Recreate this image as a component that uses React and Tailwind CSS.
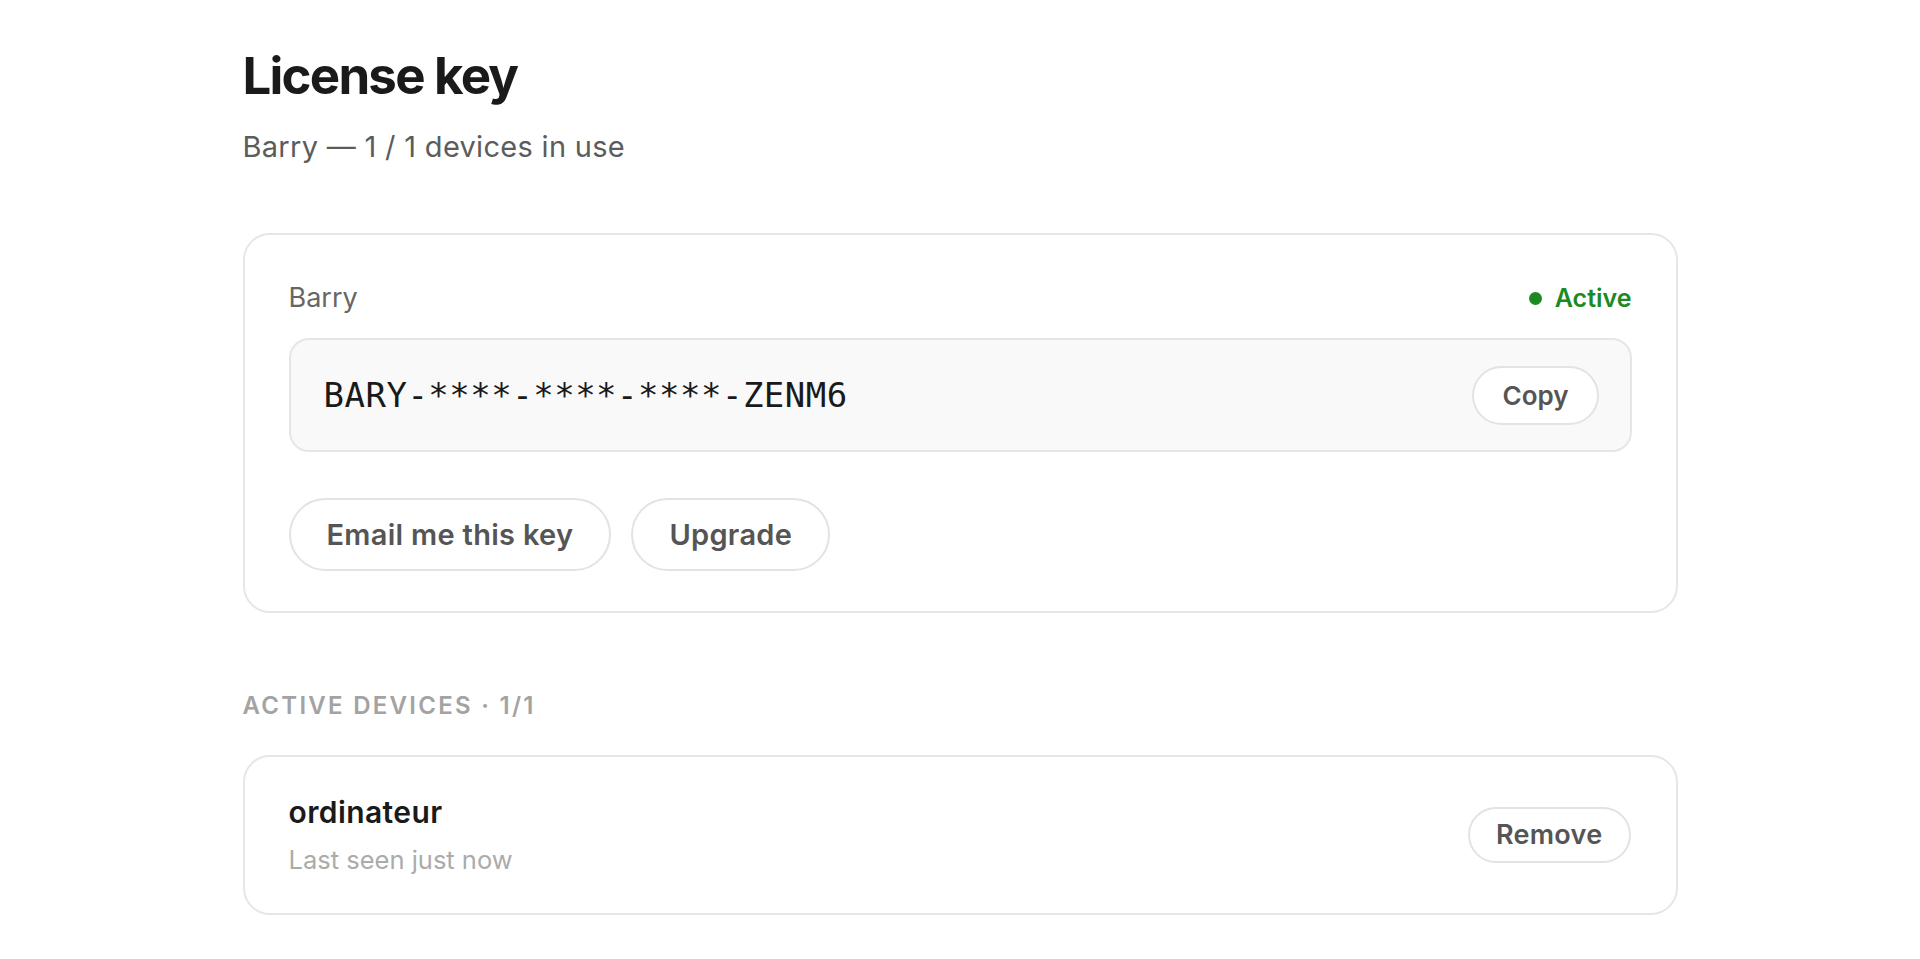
export default function App() {
  const sans = { fontFamily: "Inter, 'Noto Sans', sans-serif" };
  return (
    <div className="min-h-screen bg-white" style={sans}>
      <div className="mx-auto w-[1435px] pt-[47px]">
        <h1 className="text-[51px] leading-[57px] font-bold tracking-[-0.035em] text-[#1a1a1a]">License key</h1>
        <p className="mt-[25px] text-[29px] leading-[36px] tracking-[0.3px] text-[#5c5c5c]">Barry — 1 / 1 devices in use</p>

        <div className="mt-[68px] rounded-[27px] border-2 border-[#e6e6e6] bg-white px-[44px] pt-[43px] pb-[40px]">
          <div className="flex items-center justify-between">
            <span className="text-[27px] leading-[40px] text-[#666666]">Barry</span>
            <span className="flex items-center gap-[13px] text-[25px] leading-[40px] font-semibold text-[#1b8a24]">
              <span className="block h-[13px] w-[13px] rounded-full bg-[#1b8a24]"></span>
              Active
            </span>
          </div>
          <div className="mt-[20px] flex h-[114px] items-center justify-between rounded-[20px] border-2 border-[#e6e6e6] bg-[#f9f9f9] pl-[33px] pr-[31px]">
            <span
              className="text-[34px] leading-[40px] tracking-[0.5px] text-[#1a1a1a]"
              style={{ fontFamily: "'DejaVu Sans Mono', 'Liberation Mono', monospace" }}
            >
              BARY-****-****-****-ZENM6
            </span>
            <button className="flex h-[59px] items-center rounded-full border-2 border-[#e3e3e3] bg-white px-[28px] text-[26px] font-semibold text-[#555555]">
              Copy
            </button>
          </div>
          <div className="mt-[46px] flex gap-[20px]">
            <button className="flex h-[73px] items-center rounded-full border-2 border-[#e3e3e3] bg-white px-[36px] text-[29px] tracking-[0.3px] font-semibold text-[#555555]">
              Email me this key
            </button>
            <button className="flex h-[73px] items-center rounded-full border-2 border-[#e3e3e3] bg-white px-[36px] text-[29px] tracking-[0.3px] font-semibold text-[#555555]">
              Upgrade
            </button>
          </div>
        </div>

        <div className="mt-[77px] text-[24px] leading-[32px] font-semibold uppercase tracking-[0.095em] text-[#a3a3a3]">
          Active devices · 1/1
        </div>

        <div className="mt-[33px] flex h-[160px] items-center justify-between rounded-[27px] border-2 border-[#e6e6e6] bg-white pl-[44px] pr-[45px]">
          <div className="flex flex-col">
            <span className="text-[30px] leading-[40px] tracking-[0.4px] font-semibold text-[#1a1a1a]">ordinateur</span>
            <span className="mt-[10px] text-[25.5px] leading-[36px] text-[#ababab]">Last seen just now</span>
          </div>
          <button className="flex h-[56px] items-center rounded-full border-2 border-[#e3e3e3] bg-white px-[26px] text-[27px] tracking-[0.3px] font-semibold text-[#555555]">
            Remove
          </button>
        </div>
      </div>
    </div>
  );
}
